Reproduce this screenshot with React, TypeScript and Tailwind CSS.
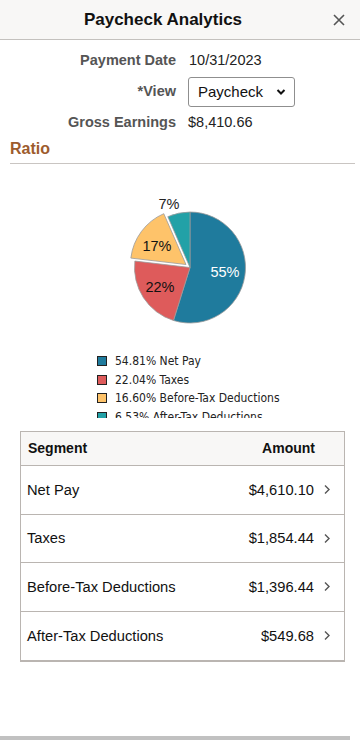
import React from "react";

// Slices of the ratio chart, clockwise from twelve o'clock
const SEGMENTS = [
  { name: "Net Pay", pct: 54.81, amount: "$4,610.10", color: "#1f7b9d" },
  { name: "Taxes", pct: 22.04, amount: "$1,854.44", color: "#de5b5b" },
  { name: "Before-Tax Deductions", pct: 16.6, amount: "$1,396.44", color: "#fec36a" },
  { name: "After-Tax Deductions", pct: 6.53, amount: "$549.68", color: "#22a1a7" },
];

const CX = 190;
const CY = 103.5;
const R = 55.5;

function point(deg: number, r: number, ox = 0, oy = 0): [number, number] {
  const a = (deg * Math.PI) / 180;
  return [CX + ox + r * Math.sin(a), CY + oy - r * Math.cos(a)];
}

function slicePath(start: number, end: number, ox = 0, oy = 0) {
  const [x1, y1] = point(start, R, ox, oy);
  const [x2, y2] = point(end, R, ox, oy);
  const large = end - start > 180 ? 1 : 0;
  return `M${CX + ox},${CY + oy} L${x1},${y1} A${R},${R} 0 ${large} 1 ${x2},${y2} Z`;
}

function PieChart() {
  let acc = 0;
  const slices = SEGMENTS.map((s, i) => {
    const start = (acc / 100) * 360;
    acc += s.pct;
    const end = i === SEGMENTS.length - 1 ? 360 : (acc / 100) * 360;
    // the before-tax slice is pulled out a little
    let ox = 0;
    let oy = 0;
    if (i === 2) {
      const mid = ((start + end) / 2) * (Math.PI / 180);
      ox = 5 * Math.sin(mid);
      oy = -5 * Math.cos(mid);
    }
    return { ...s, d: slicePath(start, end, ox, oy) };
  });

  return (
    <svg width="360" height="170" className="block">
      {slices.map((s) => (
        <path key={s.name} d={s.d} fill={s.color} stroke="#9a9a9a" strokeWidth="0.8" strokeLinejoin="round" />
      ))}
      <g fontFamily="'Liberation Sans', Arial, sans-serif" fontSize="14.5" textAnchor="middle">
        <text x="225" y="113" fill="#ffffff">55%</text>
        <text x="160" y="128" fill="#111111">22%</text>
        <text x="157" y="87" fill="#111111">17%</text>
        <text x="169" y="45" fill="#222222">7%</text>
      </g>
    </svg>
  );
}

function Chevron() {
  return (
    <svg width="8" height="11" viewBox="0 0 8 11" className="ml-[9px] shrink-0">
      <polyline points="2,1.5 6,5.5 2,9.5" fill="none" stroke="#555" strokeWidth="1.4" />
    </svg>
  );
}

export default function App() {
  return (
    <div
      className="flex h-[740px] w-[360px] flex-col overflow-hidden bg-white text-[#222]"
      style={{ fontFamily: "'Liberation Sans', Arial, sans-serif" }}
    >
      {/* Header */}
      <div className="relative flex h-10 shrink-0 items-center justify-center border-b border-[#c4c1be] bg-[#f8f7f6] pr-[34px]">
        <span className="text-[17px] font-bold text-[#111]">Paycheck Analytics</span>
        <svg width="12" height="12" viewBox="0 0 12 12" className="absolute right-[15px] top-[14px]">
          <path d="M1,1 L11,11 M11,1 L1,11" stroke="#555" strokeWidth="1.6" />
        </svg>
      </div>

      {/* Summary */}
      <div className="flex flex-col gap-[2px] pt-[7px] text-[14.5px]">
        <div className="flex h-[28px] items-center">
          <span className="w-[176px] text-right font-bold text-[#555]">Payment Date</span>
          <span className="ml-[13px]">10/31/2023</span>
        </div>
        <div className="flex h-[30px] items-center">
          <span className="w-[176px] text-right font-bold text-[#555]">*View</span>
          <div className="ml-[12px] flex h-[30px] w-[107px] items-center justify-between rounded-[3px] border border-[#8f8f8f] bg-white pl-[9px] pr-[8px]">
            <span className="text-[15px] text-[#111]">Paycheck</span>
            <svg width="10" height="8" viewBox="0 0 10 8">
              <polyline points="1.5,2 5,5.5 8.5,2" fill="none" stroke="#111" strokeWidth="2" />
            </svg>
          </div>
        </div>
        <div className="flex h-[28px] items-center">
          <span className="w-[176px] text-right font-bold text-[#555]">Gross Earnings</span>
          <span className="ml-[12px]">$8,410.66</span>
        </div>
      </div>

      {/* Ratio */}
      <div className="ml-[10px] mr-[5px] mt-[2px] border-b border-[#c9c5c2] pb-[4px] text-[16px] font-bold leading-[20px] text-[#9d5b2d]">
        Ratio
      </div>

      <PieChart />

      <div
        className="ml-[97px] mt-[18px] h-[66px] overflow-hidden text-[12px] leading-[14px] text-[#222]"
        style={{ fontFamily: "'DejaVu Sans Condensed', 'DejaVu Sans', sans-serif" }}
      >
        {SEGMENTS.map((s) => (
          <div key={s.name} className="flex h-[18.5px] items-center">
            <span className="mr-[8px] h-[10px] w-[10px] border border-[#222]" style={{ backgroundColor: s.color }} />
            <span>
              {s.pct.toFixed(2)}% {s.name}
            </span>
          </div>
        ))}
      </div>

      {/* Segment table */}
      <div className="ml-[20px] mt-[13px] w-[325px] border border-b-2 border-[#bab5b1] text-[14px]">
        <div className="flex h-[34px] items-center justify-between border-b border-[#bab5b1] bg-[#f8f7f6] pl-[7px] pr-[29px] font-bold text-[#111]">
          <span>Segment</span>
          <span>Amount</span>
        </div>
        {SEGMENTS.map((s, i) => (
          <div
            key={s.name}
            className={`flex h-[48.5px] items-center justify-between pl-[6px] pr-[13px] text-[14.7px] text-[#111] ${
              i < SEGMENTS.length - 1 ? "border-b border-[#bab5b1]" : ""
            }`}
          >
            <span>{s.name}</span>
            <span className="flex items-center">
              {s.amount}
              <Chevron />
            </span>
          </div>
        ))}
      </div>

      <div className="flex-1" />
      <div className="h-[4px] w-[350px] shrink-0 bg-[#c1c1c1]" />
    </div>
  );
}
